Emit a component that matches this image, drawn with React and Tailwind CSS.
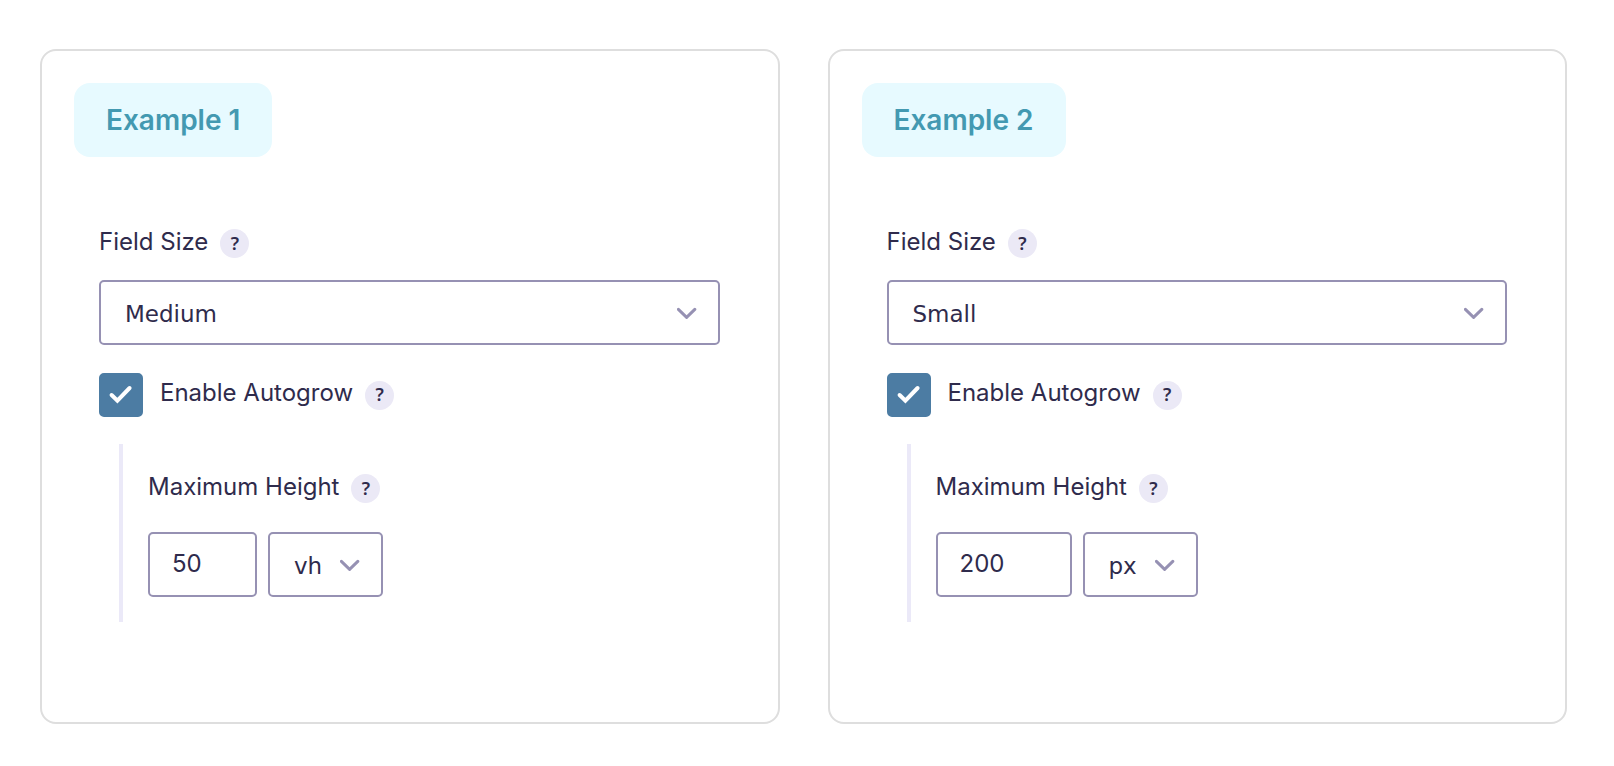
import { useId, useState } from "react";

const sizes = ["Small", "Medium", "Large"];
const units = ["px", "vh", "em"];

function HelpButton({ topic }) {
  return (
    <button
      type="button"
      aria-label={`Help: ${topic}`}
      className="flex size-[29px] items-center justify-center rounded-full bg-[#ebe9f6] pb-0.5 font-['Noto_Sans',sans-serif] text-lg font-semibold leading-4 text-[#2f2b4c]"
    >
      ?
    </button>
  );
}

function Chevron() {
  return (
    <svg
      viewBox="0 0 20 12"
      className="pointer-events-none absolute inset-y-0 right-[23px] my-auto h-3 w-5"
      fill="none"
      stroke="#9691b3"
      strokeWidth="3"
      strokeLinecap="round"
      strokeLinejoin="miter"
    >
      <path d="M1.4 2.4 L9.6 10.4 L17.8 2.4" />
    </svg>
  );
}

function Select({ id, label, value, onChange, options }) {
  return (
    <div className="relative">
      <select
        id={id}
        aria-label={label}
        value={value}
        onChange={(e) => onChange(e.target.value)}
        className="h-[65px] w-full appearance-none rounded-[5px] border-2 border-[#9691b3] bg-white pl-6 pr-12 pt-[3px] font-['DejaVu_Sans',sans-serif] text-[23px] outline-none"
      >
        {options.map((option) => (
          <option key={option}>{option}</option>
        ))}
      </select>

      <Chevron />
    </div>
  );
}

function ExampleCard({ title, initialSize, initialHeight, initialUnit, inputWidth }) {
  const id = useId();
  const [size, setSize] = useState(initialSize);
  const [autogrow, setAutogrow] = useState(true);
  const [height, setHeight] = useState(initialHeight);
  const [unit, setUnit] = useState(initialUnit);

  return (
    <section className="min-w-0 flex-1 rounded-2xl border-2 border-[#dedede] p-8">
      <h2 className="inline-block rounded-2xl bg-[#e7faff] px-8 py-[17px] text-[28px] font-semibold leading-10 text-[#4399b1]">
        {title}
      </h2>

      <div className="pb-[68px] pl-[25px] pr-[26px] pt-[72px]">

        {/* Field size */}

        <div className="flex items-center gap-3">
          <label htmlFor={`${id}-size`} className="pb-1 text-2xl leading-6">
            Field Size
          </label>
          <HelpButton topic="Field Size" />
        </div>

        <div className="mt-[22px]">
          <Select
            id={`${id}-size`}
            value={size}
            onChange={setSize}
            options={sizes}
          />
        </div>

        {/* Autogrow */}

        <div className="mt-7 flex items-center">
          <div className="relative size-11">
            <input
              id={`${id}-autogrow`}
              type="checkbox"
              checked={autogrow}
              onChange={(e) => setAutogrow(e.target.checked)}
              className="block size-11 appearance-none rounded-[5px] border-2 border-[#4c7ca3] bg-white checked:bg-[#4c7ca3]"
            />
            {autogrow && (
              <svg
                viewBox="0 0 44 44"
                className="pointer-events-none absolute inset-0"
                fill="none"
                stroke="white"
                strokeWidth="4"
                strokeLinecap="round"
              >
                <path d="M12.6 22 L18.4 27.6 L30.6 15" />
              </svg>
            )}
          </div>
          <label
            htmlFor={`${id}-autogrow`}
            className="ml-[17px] mr-3 pb-1 text-2xl leading-6"
          >
            Enable Autogrow
          </label>
          <HelpButton topic="Enable Autogrow" />
        </div>

        {/* Maximum height */}

        <div className="ml-5 mt-[27px] border-l-4 border-[#ebe9f8] pb-[25px] pl-[25px] pt-[30px]">
          <div className="flex items-center gap-3">
            <label htmlFor={`${id}-height`} className="pb-1 text-2xl leading-6">
              Maximum Height
            </label>
            <HelpButton topic="Maximum Height" />
          </div>

          <div className="mt-[29px] flex gap-[11px]">
            <input
              id={`${id}-height`}
              type="text"
              inputMode="numeric"
              value={height}
              onChange={(e) => setHeight(e.target.value)}
              className={`h-[65px] rounded-[5px] border-2 border-[#9691b3] bg-white px-[22px] pb-0.5 text-2xl outline-none ${inputWidth}`}
            />
            <div className="w-[115px]">
              <Select
                label="Maximum Height unit"
                value={unit}
                onChange={setUnit}
                options={units}
              />
            </div>
          </div>
        </div>

      </div>
    </section>
  );
}

function App() {
  return (
    <main className="flex min-h-screen items-start gap-12 bg-white pb-10 pl-10 pr-[47px] pt-[49px] font-['Inter',sans-serif] text-[#2f2b4c]">
      <ExampleCard
        title="Example 1"
        initialSize="Medium"
        initialHeight="50"
        initialUnit="vh"
        inputWidth="w-[109px]"
      />
      <ExampleCard
        title="Example 2"
        initialSize="Small"
        initialHeight="200"
        initialUnit="px"
        inputWidth="w-[136px]"
      />
    </main>
  );
}

export default App;
